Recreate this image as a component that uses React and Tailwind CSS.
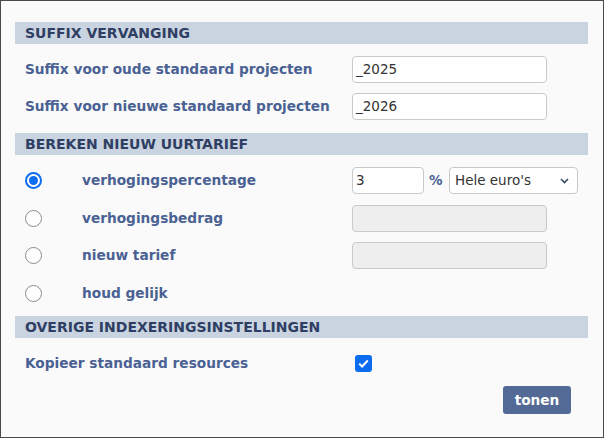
import React from "react";

const font = { fontFamily: '"DejaVu Sans", Verdana, sans-serif' };

function Header({ children }) {
  return (
    <div className="h-[22px] bg-[#cad4e0] pl-[10px] flex items-center text-[14px] font-bold text-[#2f3f64]">
      {children}
    </div>
  );
}

function Radio({ checked }) {
  return checked ? (
    <div className="w-[17px] h-[17px] rounded-full border-2 border-[#0b6cf0] bg-white flex items-center justify-center">
      <div className="w-[9px] h-[9px] rounded-full bg-[#0b6cf0]" />
    </div>
  ) : (
    <div className="w-[17px] h-[17px] rounded-full border border-[#8a8a8a] bg-white" />
  );
}

function TextInput({ value, disabled, className = "" }) {
  return (
    <div
      className={`h-[27px] rounded-[4px] border border-[#c9c9c9] flex items-center pl-[3px] text-[13.5px] text-[#333] ${
        disabled ? "bg-[#eeeeee]" : "bg-white"
      } ${className}`}
    >
      {value}
    </div>
  );
}

const label = "text-[13.7px] font-bold text-[#4a6193]";

export default function App() {
  return (
    <div
      style={font}
      className="w-[604px] h-[438px] border border-[#4a4a4a] bg-[#fafafa] pt-[21px] pl-[14px] pr-[15px] flex flex-col"
    >
      <Header>SUFFIX VERVANGING</Header>
      <div className="flex items-center mt-[12px] h-[27px]">
        <div className={`w-[337px] pl-[10px] ${label}`}>Suffix voor oude standaard projecten</div>
        <TextInput value="_2025" className="w-[195px]" />
      </div>
      <div className="flex items-center mt-[10px] h-[27px]">
        <div className={`w-[337px] pl-[10px] ${label}`}>Suffix voor nieuwe standaard projecten</div>
        <TextInput value="_2026" className="w-[195px]" />
      </div>

      <div className="mt-[13px]">
        <Header>BEREKEN NIEUW UURTARIEF</Header>
      </div>
      <div className="flex items-center mt-[12px] h-[27px]">
        <div className="w-[337px] pl-[10px] flex items-center">
          <Radio checked />
          <span className={`ml-[40px] ${label}`}>verhogingspercentage</span>
        </div>
        <TextInput value="3" className="w-[72px]" />
        <span className="ml-[5px] w-[14px] text-[13.5px] text-[#4a6193] font-bold">%</span>
        <div className="ml-[6px] w-[129px] h-[27px] rounded-[4px] border border-[#c9c9c9] bg-white flex items-center justify-between pl-[5px] pr-[8px] text-[13.5px] text-[#333]">
          <span>Hele euro's</span>
          <svg width="9" height="6" viewBox="0 0 9 6" fill="none">
            <path d="M1 1l3.5 3.5L8 1" stroke="#3b4a66" strokeWidth="1.6" />
          </svg>
        </div>
      </div>
      <div className="flex items-center mt-[11px] h-[27px]">
        <div className="w-[337px] pl-[10px] flex items-center">
          <Radio />
          <span className={`ml-[40px] ${label}`}>verhogingsbedrag</span>
        </div>
        <TextInput disabled className="w-[195px]" />
      </div>
      <div className="flex items-center mt-[10px] h-[27px]">
        <div className="w-[337px] pl-[10px] flex items-center">
          <Radio />
          <span className={`ml-[40px] ${label}`}>nieuw tarief</span>
        </div>
        <TextInput disabled className="w-[195px]" />
      </div>
      <div className="flex items-center mt-[11px] h-[27px]">
        <div className="w-[337px] pl-[10px] flex items-center">
          <Radio />
          <span className={`ml-[40px] ${label}`}>houd gelijk</span>
        </div>
      </div>

      <div className="mt-[9px]">
        <Header>OVERIGE INDEXERINGSINSTELLINGEN</Header>
      </div>
      <div className="flex items-center mt-[12px] h-[27px]">
        <div className={`w-[340px] pl-[10px] ${label}`}>Kopieer standaard resources</div>
        <div className="w-[17px] h-[17px] rounded-[3px] bg-[#0b6cf0] flex items-center justify-center">
          <svg width="11" height="9" viewBox="0 0 11 9" fill="none">
            <path d="M1.2 4.6l2.9 2.9L9.8 1.5" stroke="white" strokeWidth="2" />
          </svg>
        </div>
      </div>
      <div className="flex justify-end mt-[9px] pr-[17px]">
        <div className="w-[68px] h-[28px] rounded-[3px] bg-[#536a96] text-white text-[13.7px] font-bold flex items-center justify-center">
          tonen
        </div>
      </div>
    </div>
  );
}
